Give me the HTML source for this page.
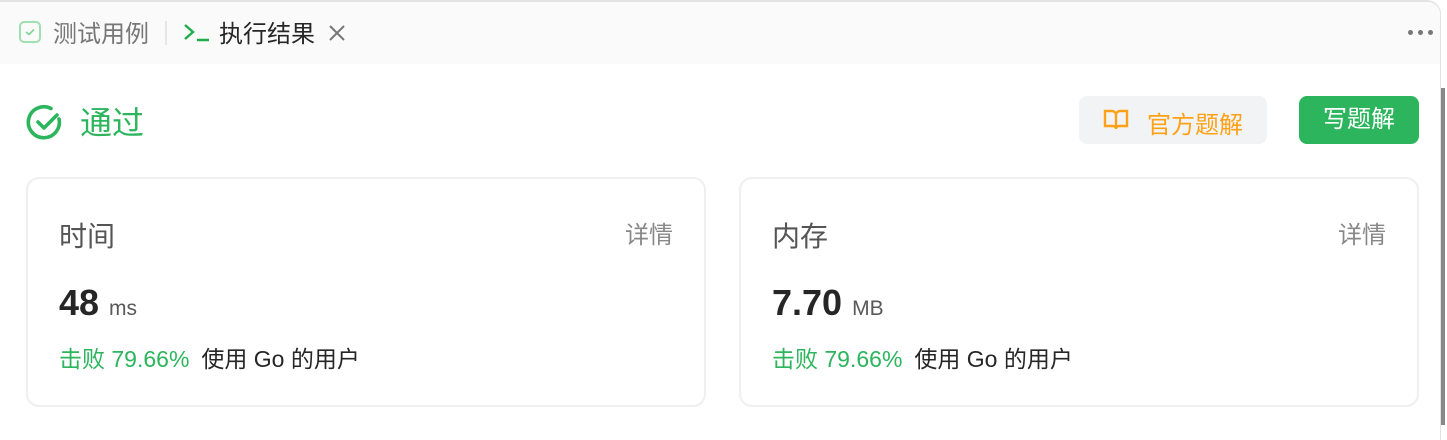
<!DOCTYPE html>
<html><head><meta charset="utf-8"><style>
*{margin:0;padding:0;box-sizing:border-box}
body{width:1447px;height:425px;overflow:hidden;background:#fff;font-family:"Liberation Sans","Noto Sans CJK SC",sans-serif;position:relative}
.frame{position:absolute;left:0;top:0;width:1441px;height:440px;border-top:2px solid #e3e3e3;border-right:1px solid #e3e3e3;border-top-right-radius:14px;overflow:hidden}
.tabs{position:absolute;left:0;top:-2px;width:100%;height:64px;background:#fafafa}
.t{position:absolute;top:20px;font-size:24px;line-height:30px}
.card{position:absolute;top:175px;width:680px;height:230px;border:2px solid #efefef;border-radius:13px}
.lab{position:absolute;left:31px;top:36px;font-size:28px;color:#555}
.det{position:absolute;right:31px;top:36px;font-size:24px;color:#888}
.val{position:absolute;left:31px;top:103px;font-size:36px;font-weight:bold;color:#262626}
.val span{font-size:21px;font-weight:normal;color:#595959;margin-left:10px}
.beat{position:absolute;left:31px;top:161px;font-size:23px;color:#262626}
.beat b{font-weight:normal;color:#2cb55d;margin-right:12px}
</style></head><body>
<div class="frame">
<div class="tabs">
 <div style="position:absolute;left:19px;top:21px;width:22px;height:22px;border:2px solid #9fe0b0;border-radius:5px"></div>
 <svg style="position:absolute;left:24px;top:27px" width="12" height="10"><path d="M2 5l3 2.5 5-5" stroke="#7fd497" stroke-width="1.6" fill="none"/></svg>
 <div class="t" style="left:53px;color:#777">测试用例</div>
 <div style="position:absolute;left:165px;top:21px;width:2px;height:24px;background:#e5e5e5"></div>
 <svg style="position:absolute;left:183px;top:22px" width="28" height="22"><path d="M2 3l8 7-8 7" stroke="#1fad4b" stroke-width="2.4" fill="none"/><path d="M14 18h12" stroke="#1fad4b" stroke-width="2.4"/></svg>
 <div class="t" style="left:219px;color:#262626">执行结果</div>
 <svg style="position:absolute;left:328px;top:24px" width="18" height="18"><path d="M2 2l14 14M16 2L2 16" stroke="#777" stroke-width="2"/></svg>
 <div style="position:absolute;left:1408px;top:30px;width:28px;height:6px">
  <i style="position:absolute;left:0;width:5px;height:5px;border-radius:50%;background:#777"></i>
  <i style="position:absolute;left:10px;width:5px;height:5px;border-radius:50%;background:#777"></i>
  <i style="position:absolute;left:20px;width:5px;height:5px;border-radius:50%;background:#777"></i>
 </div>
</div>
<svg style="position:absolute;left:26px;top:102px" width="38" height="38"><path d="M33 15A15.5 15.5 0 1 1 25 4.5" stroke="#2cb55d" stroke-width="3.6" fill="none" stroke-linecap="round"/><path d="M12 18l6 6 13-13" stroke="#2cb55d" stroke-width="3.6" fill="none" stroke-linecap="round" stroke-linejoin="round"/></svg>
<div style="position:absolute;left:80px;top:101px;font-size:32px;color:#2cb55d;line-height:40px">通过</div>
<div style="position:absolute;left:1079px;top:94px;width:188px;height:48px;background:#f2f3f5;border-radius:8px">
 <svg style="position:absolute;left:24px;top:13px" width="26" height="22"><path d="M2 2h7a4 4 0 0 1 4 4v14a3 3 0 0 0-3-3H2zM24 2h-7a4 4 0 0 0-4 4v14a3 3 0 0 1 3-3h8z" stroke="#ffa116" stroke-width="2.4" fill="none"/></svg>
 <div style="position:absolute;left:68px;top:9px;font-size:24px;color:#ffa116">官方题解</div>
</div>
<div style="position:absolute;left:1299px;top:94px;width:120px;height:48px;background:#2cb55d;border-radius:8px;color:#fff;font-size:24px;text-align:center;line-height:48px">写题解</div>
<div class="card" style="left:26px"><div class="lab">时间</div><div class="det">详情</div><div class="val">48<span>ms</span></div><div class="beat"><b>击败 79.66%</b>使用 Go 的用户</div></div>
<div class="card" style="left:739px"><div class="lab">内存</div><div class="det">详情</div><div class="val">7.70<span>MB</span></div><div class="beat"><b>击败 79.66%</b>使用 Go 的用户</div></div>
</div>
<div style="position:absolute;left:1441px;top:88px;width:4px;height:337px;background:#888"></div>
</body></html>
